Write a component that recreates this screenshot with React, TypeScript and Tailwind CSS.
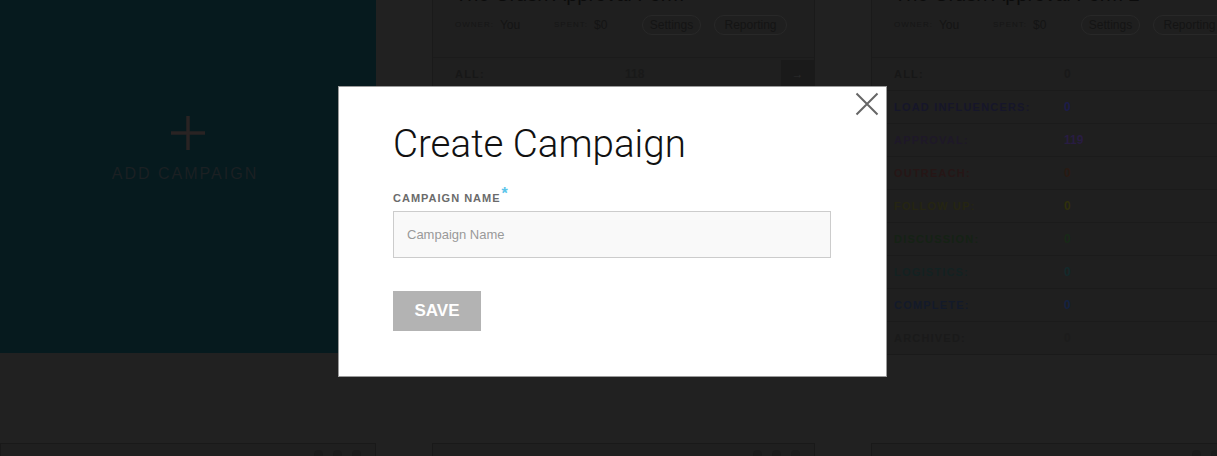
const stages = [
  { label: "ALL:", value: "0", lc: "text-[#171717]", vc: "text-[#191919]" },
  { label: "LOAD INFLUENCERS:", value: "0", lc: "text-[#16162a]", vc: "text-[#1c1c4a]" },
  { label: "APPROVAL:", value: "119", lc: "text-[#1e1828]", vc: "text-[#281c42]" },
  { label: "OUTREACH:", value: "0", lc: "text-[#261616]", vc: "text-[#2a1a12]" },
  { label: "FOLLOW UP:", value: "0", lc: "text-[#252512]", vc: "text-[#30300c]" },
  { label: "DISCUSSION:", value: "0", lc: "text-[#152215]", vc: "text-[#182a18]" },
  { label: "LOGISTICS:", value: "0", lc: "text-[#132222]", vc: "text-[#132a2c]" },
  { label: "COMPLETE:", value: "0", lc: "text-[#131a2a]", vc: "text-[#132242]" },
  { label: "ARCHIVED:", value: "0", lc: "text-[#1a1a1a]", vc: "text-[#1c1c1c]" },
];

interface CardProps {
  title: string;
  allCount: string;
  showArrow?: boolean;
}

const CampaignCard = ({ title, allCount, showArrow }: CardProps) => {
  return (
    <div className="w-[383px] h-[395px] shrink-0 bg-[#1f1f1f] border border-[#1a1a1a] flex flex-col">
      <div className="pt-[19px] pl-[22px] h-[97px]">
        <div className="text-[20px] leading-[28px] text-[#0c0c0c] whitespace-nowrap">{title}</div>
        <div className="mt-[7px] h-[20px] flex items-center text-[12px] text-[#141414]">
          <div className="w-[99px] flex items-center gap-[6px]">
            <span className="text-[8px] tracking-[1px] text-[#161616]">OWNER:</span>
            <span>You</span>
          </div>
          <div className="w-[88px] flex items-center gap-[6px]">
            <span className="text-[8px] tracking-[1px] text-[#161616]">SPENT:</span>
            <span>$0</span>
          </div>
          <div className="w-[59px] h-[20px] rounded-full border border-[#282828] flex items-center justify-center">
            Settings
          </div>
          <div className="ml-[13px] w-[73px] h-[20px] rounded-full border border-[#282828] flex items-center justify-center">
            Reporting
          </div>
        </div>
      </div>
      {stages.map((s, i) => (
        <div
          key={s.label}
          className="h-[33px] shrink-0 flex items-center border-t border-[#1b1b1b] pl-[22px]"
        >
          <span className={`w-[170px] text-[11px] font-bold tracking-[1.2px] ${s.lc}`}>{s.label}</span>
          <span className={`text-[12px] font-bold ${s.vc}`}>{i === 0 ? allCount : s.value}</span>
          {i === 0 && showArrow && (
            <div className="ml-auto w-[33px] h-[28px] bg-[#1a1a1a] flex items-center justify-center text-[#2c2c2c] text-[12px]">
              →
            </div>
          )}
        </div>
      ))}
    </div>
  );
};

const BottomCard = ({ w }: { w: string }) => (
  <div className={`${w} h-[40px] shrink-0 bg-[#1f1f1f] border-t border-x border-[#191919] flex justify-end pr-[14px] pt-[6px] gap-[10px]`}>
    <span className="w-[9px] h-[9px] rounded-full bg-[#1b1b1b]" />
    <span className="w-[9px] h-[9px] rounded-full bg-[#1b1b1b]" />
    <span className="w-[9px] h-[9px] rounded-sm bg-[#1b1b1b]" />
  </div>
);

export default function App() {
  return (
    <div className="relative w-[1217px] h-[456px] overflow-hidden bg-[#212121] font-['Liberation_Sans',Arial,sans-serif]">
      <div className="flex gap-[56px] -mt-[40px]">
        <div className="w-[376px] h-[393px] shrink-0 bg-[#061a1e] flex flex-col items-center pt-[155px]">
          <svg width="36" height="36" viewBox="0 0 36 36">
            <path d="M18 1v34M1 18h34" stroke="#292323" strokeWidth="3.5" />
          </svg>
          <div className="mt-[13px] -ml-[6px] text-[16px] leading-[20px] tracking-[2px] text-[#1b2023]">ADD CAMPAIGN</div>
        </div>
        <CampaignCard title="The Crush Approval Form" allCount="118" showArrow />
        <CampaignCard title="The Crush Approval Form 2" allCount="0" />
      </div>

      <div className="flex gap-[56px] mt-[88px]">
        <BottomCard w="w-[376px]" />
        <BottomCard w="w-[383px]" />
        <BottomCard w="w-[383px]" />
      </div>

      <div className="absolute left-[338px] top-[86px] w-[549px] h-[291px] bg-white border border-[#9a9a9a] pl-[54px] pt-[33px]">
        <button className="absolute top-[5px] right-[7px] w-[24px] h-[24px] flex items-center justify-center">
          <svg width="24" height="24" viewBox="0 0 24 24">
            <path d="M1.5 1.5l21 21M22.5 1.5l-21 21" stroke="#666" strokeWidth="2" />
          </svg>
        </button>
        <h2 className="font-['Roboto',sans-serif] font-light text-[38.5px] leading-[48px] text-[#111] whitespace-nowrap">
          Create Campaign
        </h2>
        <div className="mt-[23px] h-[14px] flex items-start text-[11px] leading-[14px] tracking-[1px] text-[#6b6b6b] font-semibold">
          CAMPAIGN NAME
          <span className="text-[#5bc5ea] text-[16px] leading-[10px] -mt-[2px] ml-[1px] font-bold">*</span>
        </div>
        <input
          placeholder="Campaign Name"
          className="mt-[6px] block w-[438px] h-[47px] bg-[#f9f9f9] border border-[#cccccc] pl-[13px] text-[13px] text-[#333] placeholder:text-[#999] outline-none"
        />
        <button className="mt-[33px] w-[88px] h-[40px] bg-[#b3b3b3] text-white text-[17px] font-bold">
          SAVE
        </button>
      </div>
    </div>
  );
}
